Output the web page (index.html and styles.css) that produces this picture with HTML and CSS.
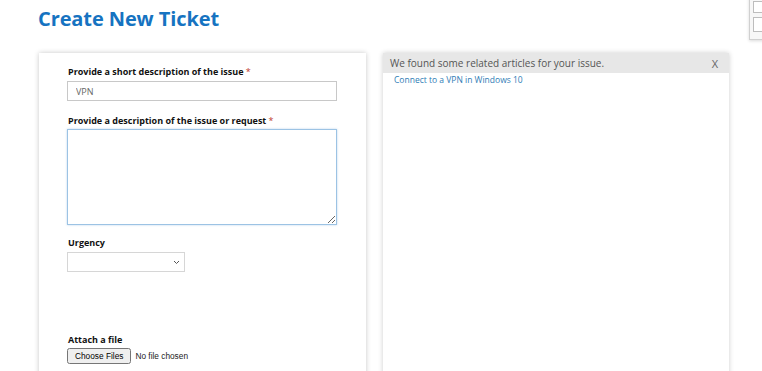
FILE: index.html
```html
<!DOCTYPE html>
<html lang="en">
<head>
  <meta charset="UTF-8">
  <title>Create New Ticket</title>
  <link rel="stylesheet" href="styles.css">
</head>
<body>

  <!-- corner widget, cut off by the window -->
  <div class="corner-widget">
    <span></span>
    <span></span>
  </div>

  <h1 class="page-title">Create New Ticket</h1>

  <div class="layout">
    <!-- Ticket form -->
    <form class="ticket-card">
      <div class="field">
        <label for="short">Provide a short description of the issue <span class="req">*</span></label>
        <input type="text" id="short" value="VPN">
      </div>
      <div class="field field-desc">
        <label for="desc">Provide a description of the issue or request <span class="req">*</span></label>
        <textarea id="desc"></textarea>
      </div>
      <div class="field">
        <label for="urgency">Urgency</label>
        <div class="select-wrap">
          <select id="urgency"><option></option></select>
          <svg class="chevron" width="7" height="5" viewBox="0 0 7 5">
            <path d="M1 1 L3.5 3.5 L6 1" fill="none" stroke="#555" stroke-width="1"/>
          </svg>
        </div>
      </div>
      <div class="field field-attach">
        <label for="files">Attach a file</label>
        <input type="file" id="files" multiple>
      </div>
    </form>

    <!-- Related articles -->
    <div class="related">
      <div class="related-head">
        <span>We found some related articles for your issue.</span>
        <span class="close">X</span>
      </div>
      <div class="related-body">
        <a href="#">Connect to a VPN in Windows 10</a>
      </div>
    </div>
  </div>

</body>
</html>
```

FILE: styles.css
```css
/* Basic styling */
body {
  margin: 0;
  font-family: "Open Sans", "Noto Sans", Arial, sans-serif;
  background: #ffffff;
  color: #111;
  overflow: hidden;
  height: 371px;
}
.page-title {
  margin: 0;
  padding: 5px 0 0 38px;
  height: 47px;
  box-sizing: border-box;
  font-size: 20px;
  font-weight: 700;
  color: #1673c1;
  letter-spacing: -0.1px;
}

.layout {
  display: flex;
  gap: 17px;
  padding-left: 39px;
  margin-top: 6px;
}

/* Form card */
.ticket-card {
  width: 327px;
  height: 330px;
  box-sizing: border-box;
  padding: 13px 0 0 28px;
  background: #fff;
  box-shadow: 0 0 5px rgba(0, 0, 0, 0.22);
}
.field {
  display: flex;
  flex-direction: column;
  align-items: flex-start;
  margin-bottom: 14px;
}
.field label {
  font-size: 9px;
  font-weight: 700;
  line-height: 12px;
  margin: 0 0 3px 1px;
  color: #111;
}
.field-desc label {
  margin-bottom: 2px;
}
.field-desc {
  margin-bottom: 12px;
}
.req {
  color: #c0392b;
  font-weight: 400;
}
input[type="text"] {
  width: 270px;
  height: 20px;
  box-sizing: border-box;
  border: 1px solid #c8c8c8;
  padding: 0 8px;
  font-family: inherit;
  font-size: 9px;
  color: #666;
}
textarea {
  width: 270px;
  height: 96px;
  box-sizing: border-box;
  border: 1px solid #9cc3e4;
  box-shadow: 0 0 2px rgba(90, 150, 210, 0.4);
  resize: both;
}
.select-wrap {
  position: relative;
}
select {
  display: block;
  width: 118px;
  height: 20px;
  box-sizing: border-box;
  border: 1px solid #d6d6d6;
  background: #fff;
  font-size: 9px;
  appearance: none;
}
.chevron {
  position: absolute;
  right: 5px;
  top: 8px;
}
.field-attach {
  margin-top: 62px;
}
.field-attach label {
  margin-bottom: 2px;
}
input[type="file"] {
  font-family: "Liberation Sans", Arial, sans-serif;
  font-size: 8.3px;
  color: #222;
}

/* Related articles panel */
.related {
  width: 346px;
  height: 330px;
  background: #fff;
  box-shadow: 0 0 5px rgba(0, 0, 0, 0.2);
}
.related-head {
  display: flex;
  justify-content: space-between;
  align-items: center;
  height: 20px;
  padding: 0 11px 0 7px;
  background: #e7e7e7;
  font-size: 10px;
  color: #555;
}
.related-head .close {
  font-size: 11px;
  color: #666;
}
.related-body {
  padding: 1px 0 0 11px;
  font-size: 8.5px;
  line-height: 12px;
}
.related-body a {
  color: #2f7db6;
  text-decoration: none;
}

/* Corner widget */
.corner-widget {
  position: absolute;
  top: -4px;
  left: 749px;
  width: 20px;
  height: 42px;
  border: 1px solid #d0d0d0;
  background: #f7f7f7;
  box-shadow: 0 1px 3px rgba(0, 0, 0, 0.15);
}
.corner-widget span {
  display: block;
  margin: 4px 0 0 3px;
  width: 16px;
  height: 10px;
  border: 1px solid #bdbdbd;
  background: #fff;
}
.corner-widget span + span {
  height: 13px;
}
```
